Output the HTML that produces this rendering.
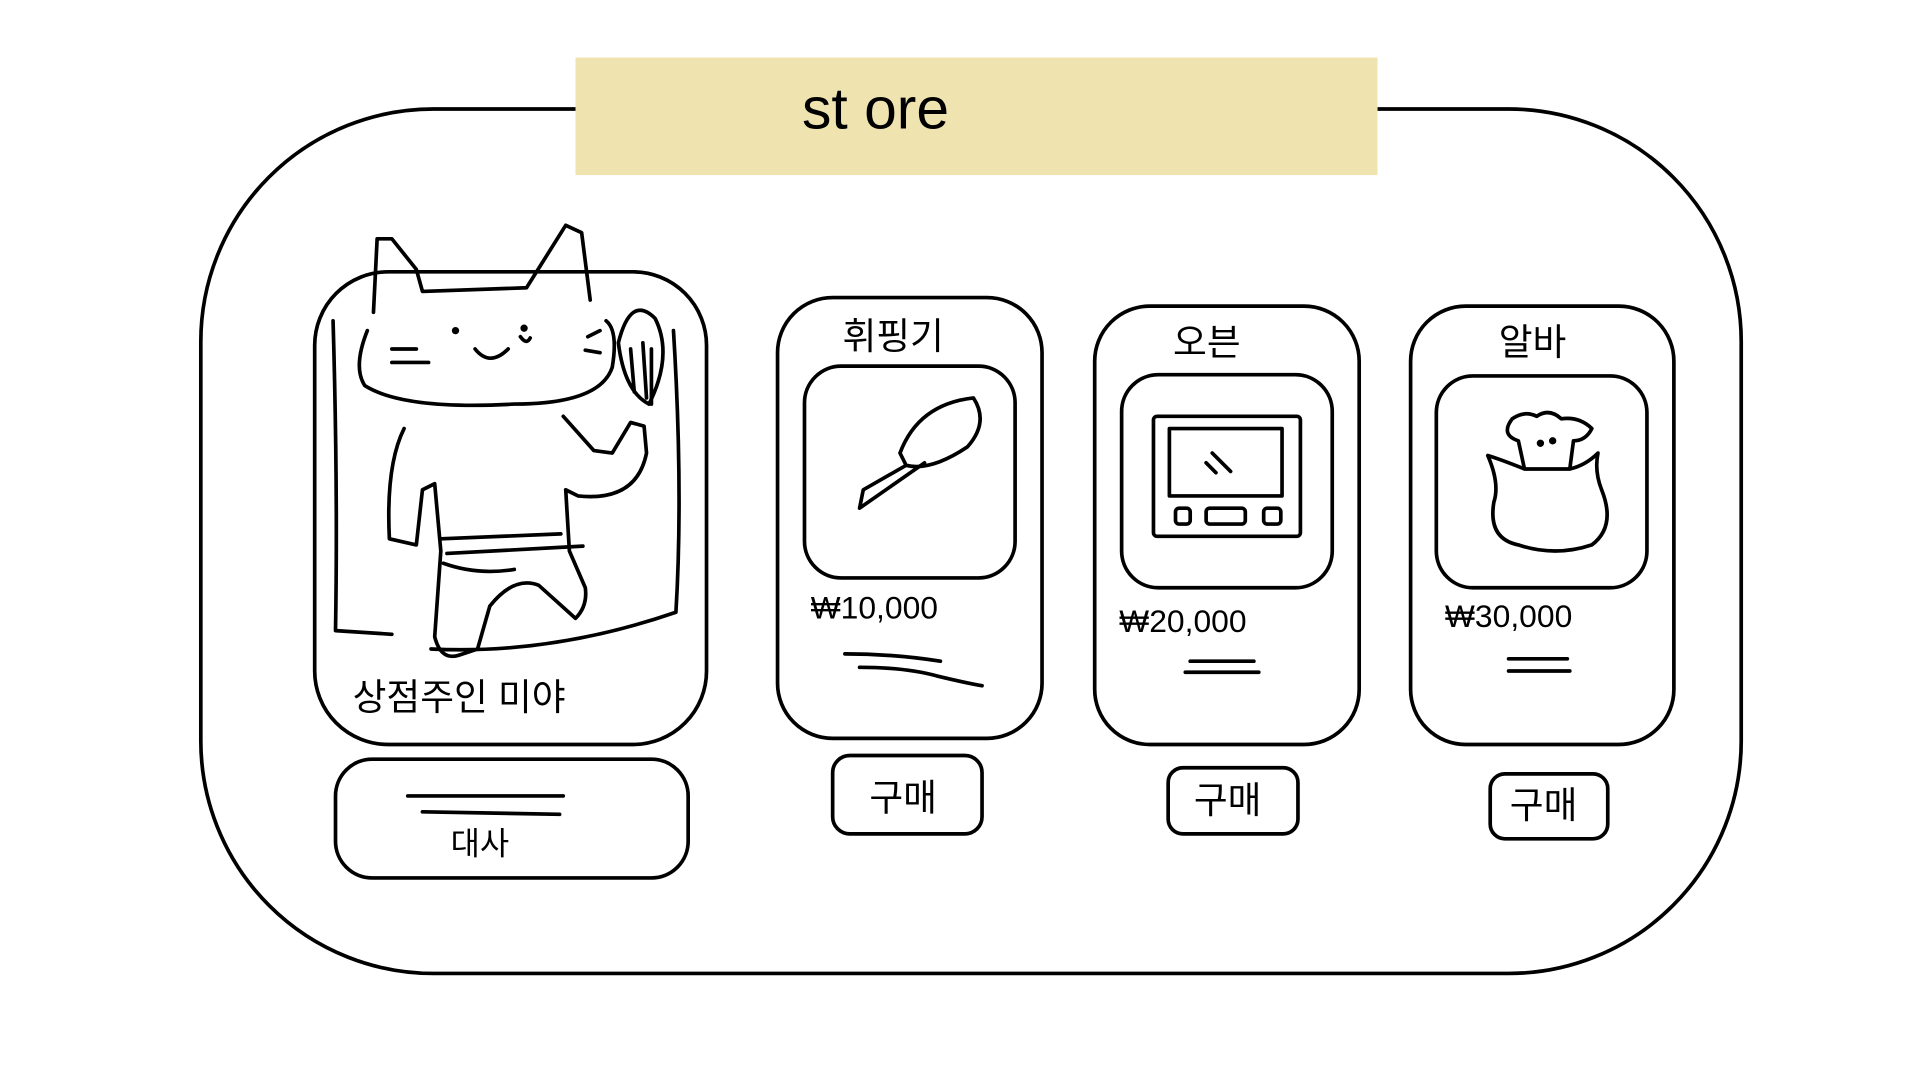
<!DOCTYPE html>
<html><head><meta charset="utf-8"><style>
html,body{margin:0;padding:0;background:#fff;width:1920px;height:1080px;overflow:hidden}
svg{display:block}
text{font-family:"Liberation Sans","Noto Sans CJK KR",sans-serif;fill:#000}
</style></head><body>
<svg width="1920" height="1080" viewBox="0 0 1568 882" preserveAspectRatio="none" xmlns="http://www.w3.org/2000/svg">
<g fill="none" stroke="#000" stroke-width="3" stroke-linecap="round" stroke-linejoin="round">
<rect x="164" y="89" width="1258" height="706" rx="190"/>
</g>
<rect x="470" y="47" width="655" height="96" fill="#efe3b0"/>
<text x="655" y="105" font-size="48" font-family="DejaVu Sans, sans-serif" style="font-weight:200">st ore</text>
<g fill="none" stroke="#000" stroke-width="3" stroke-linecap="round" stroke-linejoin="round">
<rect x="257" y="222" width="320" height="386" rx="60"/>
<path d="M272 262 Q276 400 274 515 L320 518 M352 530 Q450 535 552 500 Q558 400 550 270"/>
<path d="M305 255 L308 195 L320 195 L340 220 L345 238 L430 235 L462 184 L475 190 L482 245"/>
<path d="M300 270 Q288 300 298 315 Q330 335 420 330 Q490 330 500 300 Q505 270 495 262"/>
<path d="M320 285 L340 285 M320 296 L350 296 M388 285 Q400 300 415 285 M425 275 Q430 282 433 276 M480 275 L490 270 M478 286 L490 288"/>
<circle cx="372" cy="270" r="1.5"/><circle cx="428" cy="268" r="1.5"/>
<path d="M505 280 Q515 240 535 260 Q550 290 530 330 Q510 320 505 280 M515 285 L518 320 M525 280 L528 325 M532 285 L532 330"/>
<path d="M330 350 Q315 380 318 440 L340 445 L345 400 L355 395 L360 450 L355 520 Q360 540 375 535 L390 530 L400 495 Q420 470 440 478 L470 505 Q480 495 478 480 L465 450 L462 400 L472 405 Q520 410 528 370 L526 348 L515 345 L500 370 L485 368 L460 340"/>
<path d="M360 440 L458 436 M365 452 L476 446 M362 460 Q390 470 420 465"/>
<text x="288" y="580" font-size="30" stroke="none">상점주인 미야</text>
<rect x="274" y="620" width="288" height="97" rx="30"/>
<path d="M333 650 L460 650 M345 663 L457 665"/>
<text x="368" y="698" font-size="26" stroke="none">대사</text>
<rect x="635" y="243" width="216" height="360" rx="45"/>
<rect x="657" y="299" width="172" height="173" rx="30"/>
<text x="688" y="285" font-size="30" stroke="none">휘핑기</text>
<path d="M735 370 Q750 330 795 325 Q808 345 790 365 Q760 385 740 380 Z M740 380 L705 400 L702 415 L755 378"/>
<text x="662" y="505" font-size="26" stroke="none">₩10,000</text>
<path d="M690 534 Q730 534 768 540 M702 545 Q740 545 765 552 Q790 558 802 560"/>
<rect x="680" y="617" width="122" height="64" rx="14"/>
<text x="710" y="662" font-size="30" stroke="none">구매</text>
<rect x="894" y="250" width="216" height="358" rx="45"/>
<rect x="916" y="306" width="172" height="174" rx="30"/>
<text x="958" y="290" font-size="30" stroke="none">오븐</text>
<rect x="942" y="340" width="120" height="98" rx="3"/>
<rect x="955" y="350" width="92" height="55"/>
<path d="M990 370 L1005 385 M985 378 L993 386"/>
<rect x="960" y="415" width="12" height="13" rx="3"/><rect x="985" y="415" width="32" height="13" rx="3"/><rect x="1032" y="415" width="14" height="13" rx="3"/>
<text x="914" y="516" font-size="26" stroke="none">₩20,000</text>
<path d="M972 540 L1024 540 M968 549 L1028 549"/>
<rect x="954" y="627" width="106" height="54" rx="12"/>
<text x="975" y="664" font-size="30" stroke="none">구매</text>
<rect x="1152" y="250" width="215" height="358" rx="45"/>
<rect x="1173" y="307" width="172" height="173" rx="30"/>
<text x="1224" y="290" font-size="30" stroke="none">알바</text>
<path d="M1245 383 L1240 360 Q1225 355 1235 342 Q1245 335 1255 340 Q1265 333 1275 342 Q1290 340 1300 350 Q1295 360 1285 360 L1282 383 M1245 383 L1282 383 M1245 383 Q1225 375 1215 372 Q1225 395 1220 410 Q1215 440 1240 445 Q1270 455 1300 445 Q1320 430 1308 400 Q1302 385 1305 370 Q1295 380 1282 383"/>
<circle cx="1258" cy="362" r="1.5"/><circle cx="1268" cy="360" r="1.5"/>
<text x="1180" y="512" font-size="26" stroke="none">₩30,000</text>
<path d="M1232 538 L1280 538 M1232 548 L1282 548"/>
<rect x="1217" y="632" width="96" height="53" rx="12"/>
<text x="1233" y="668" font-size="30" stroke="none">구매</text>
</g>
</svg>
</body></html>
